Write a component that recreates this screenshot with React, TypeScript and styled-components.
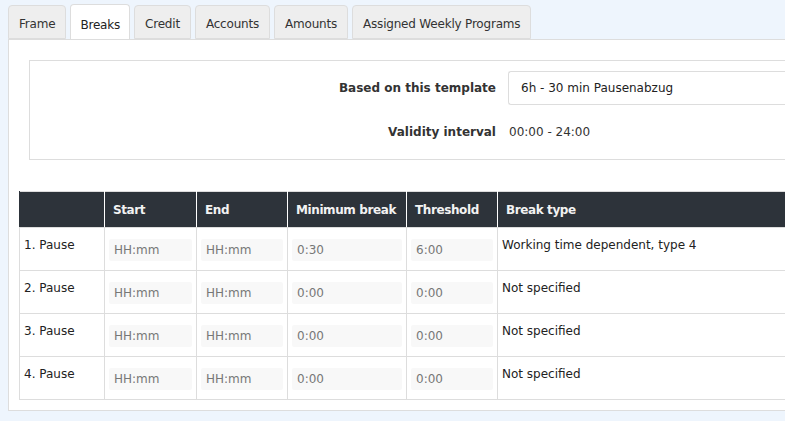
import * as React from 'react';
import styled, { createGlobalStyle } from 'styled-components';

const GlobalStyle = createGlobalStyle`
  html, body {
    margin: 0;
    padding: 0;
    background: #eef5fd;
    font-family: "DejaVu Sans", Verdana, sans-serif;
    font-size: 12px;
    color: #333;
  }
  * {
    box-sizing: border-box;
  }
`;

const Page = styled.div`
  padding: 5px 0 0 8px;
  width: 100%;
  height: 421px;
  overflow: hidden;
`;

const TabBar = styled.div`
  display: flex;
  gap: 4px;
  align-items: flex-end;
  height: 34px;
  position: relative;
  z-index: 1;
`;

const Tab = styled.div<{ $active?: boolean }>`
  height: ${(p) => (p.$active ? '35px' : '34px')};
  padding: ${(p) => (p.$active ? '5px 9px 0' : '3px 10px 0')};
  display: flex;
  align-items: center;
  border: 1px solid #dddddd;
  border-bottom: ${(p) => (p.$active ? 'none' : '1px solid #dddddd')};
  border-radius: 4px 4px 0 0;
  background: ${(p) => (p.$active ? '#ffffff' : '#eeeeee')};
  color: ${(p) => (p.$active ? '#222' : '#333')};
  letter-spacing: -0.2px;
  white-space: nowrap;
`;

const Panel = styled.div`
  background: #ffffff;
  border: 1px solid #dddddd;
  border-right: none;
  height: 372px;
  padding: 20px 0 0 10px;
`;

const TemplateBox = styled.div`
  margin-left: 10px;
  border: 1px solid #dddddd;
  border-right: none;
  height: 100px;
  padding: 10px 0 0 0;
  display: grid;
  grid-template-columns: 478px 1fr;
  grid-template-rows: 34px 34px;
  row-gap: 10px;
  align-items: center;
`;

const FieldLabel = styled.div`
  font-weight: bold;
  text-align: right;
  padding-right: 12px;
  color: #333;
`;

const SelectBox = styled.div`
  height: 34px;
  border: 1px solid #dddddd;
  border-right: none;
  border-radius: 3px 0 0 3px;
  display: flex;
  align-items: center;
  padding-left: 12px;
  color: #222;
`;

const PlainValue = styled.div`
  padding-left: 1px;
  color: #333;
`;

const Table = styled.table`
  margin-top: 31px;
  border-collapse: collapse;
  width: 780px;
  table-layout: fixed;
  border-top: 1px solid #dddddd;
`;

const Th = styled.th<{ $w: number }>`
  width: ${(p) => p.$w}px;
  height: 36px;
  background: #2d333a;
  color: #f2f2f2;
  text-align: left;
  font-weight: bold;
  letter-spacing: -0.4px;
  padding: 0 6px 0 8px;
  white-space: nowrap;
  overflow: hidden;
  border-left: 1px solid #ffffff;
  border-bottom: 1px solid #dddddd;
  &:first-child {
    border-left: 1px solid #2d333a;
  }
`;

const Td = styled.td`
  height: 43px;
  border: 1px solid #dddddd;
  vertical-align: top;
  padding: 10px 4px 0 4px;
  color: #222;
  white-space: nowrap;
`;

const TimeInput = styled.div`
  height: 22px;
  margin-top: 1px;
  background: #f8f8f8;
  border-radius: 2px;
  display: flex;
  align-items: center;
  padding-left: 5px;
  color: #777;
`;

const rows = [
  { label: '1. Pause', min: '0:30', threshold: '6:00', type: 'Working time dependent, type 4' },
  { label: '2. Pause', min: '0:00', threshold: '0:00', type: 'Not specified' },
  { label: '3. Pause', min: '0:00', threshold: '0:00', type: 'Not specified' },
  { label: '4. Pause', min: '0:00', threshold: '0:00', type: 'Not specified' },
];

const tabs = ['Frame', 'Breaks', 'Credit', 'Accounts', 'Amounts', 'Assigned Weekly Programs'];

export default function App() {
  return (
    <>
      <GlobalStyle />
      <Page>
        <TabBar>
          {tabs.map((t) => (
            <Tab key={t} $active={t === 'Breaks'}>
              {t}
            </Tab>
          ))}
        </TabBar>
        <Panel>
          <TemplateBox>
            <FieldLabel>Based on this template</FieldLabel>
            <SelectBox>6h - 30 min Pausenabzug</SelectBox>
            <FieldLabel>Validity interval</FieldLabel>
            <PlainValue>00:00 - 24:00</PlainValue>
          </TemplateBox>
          <Table>
            <thead>
              <tr>
                <Th $w={85}></Th>
                <Th $w={92}>Start</Th>
                <Th $w={91}>End</Th>
                <Th $w={119}>Minimum break</Th>
                <Th $w={91}>Threshold</Th>
                <Th $w={302}>Break type</Th>
              </tr>
            </thead>
            <tbody>
              {rows.map((r) => (
                <tr key={r.label}>
                  <Td>{r.label}</Td>
                  <Td>
                    <TimeInput>HH:mm</TimeInput>
                  </Td>
                  <Td>
                    <TimeInput>HH:mm</TimeInput>
                  </Td>
                  <Td>
                    <TimeInput>{r.min}</TimeInput>
                  </Td>
                  <Td>
                    <TimeInput>{r.threshold}</TimeInput>
                  </Td>
                  <Td>{r.type}</Td>
                </tr>
              ))}
            </tbody>
          </Table>
        </Panel>
      </Page>
    </>
  );
}
